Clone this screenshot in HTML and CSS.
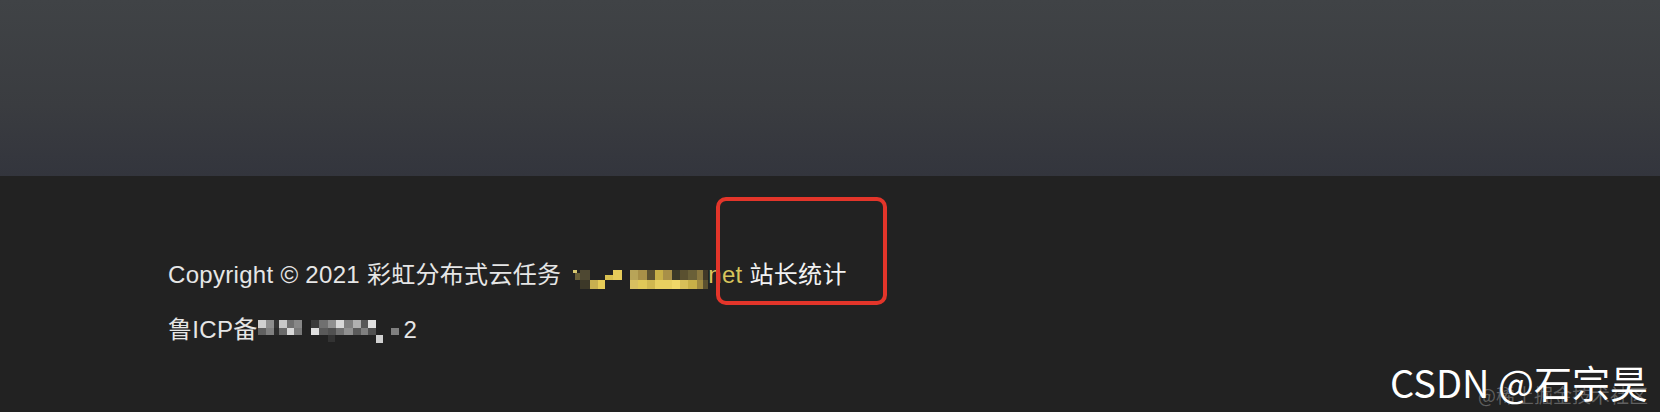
FILE: index.html
```html
<!DOCTYPE html>
<html lang="zh-CN">
<head>
<meta charset="utf-8">
<title>彩虹分布式云任务</title>
<link rel="stylesheet" href="styles.css">
</head>
<body>
<header class="hero"></header>
<footer class="footer">
  <div class="lines">
    <p class="line">Copyright © 2021 彩虹分布式云任务 <a class="site"><svg class="mosaic m1" width="140" height="22" viewBox="568 266 140 22" aria-hidden="true">
      <rect x="573" y="268" width="4" height="3" fill="#d8c870"/>
      <rect x="575" y="271" width="5" height="7" fill="#6a6038"/>
      <rect x="580" y="268" width="10" height="10" fill="#4e4832"/>
      <rect x="580" y="278" width="10" height="9" fill="#3c3828"/>
      <rect x="590" y="278" width="8" height="9" fill="#c8b050"/>
      <rect x="598" y="278" width="7" height="9" fill="#e6cc58"/>
      <rect x="605" y="273" width="8" height="5" fill="#d8c050"/>
      <rect x="613" y="268" width="9" height="10" fill="#e6cc5a"/>
      <rect x="630" y="268" width="8" height="10" fill="#b8a458"/>
      <rect x="630" y="278" width="8" height="9" fill="#d8c060"/>
      <rect x="638" y="268" width="9" height="10" fill="#a89048"/>
      <rect x="638" y="278" width="9" height="9" fill="#e0c858"/>
      <rect x="647" y="268" width="8" height="10" fill="#5a5030"/>
      <rect x="647" y="278" width="8" height="9" fill="#d0b850"/>
      <rect x="655" y="268" width="8" height="10" fill="#c8b048"/>
      <rect x="655" y="278" width="8" height="9" fill="#e8d060"/>
      <rect x="663" y="268" width="9" height="10" fill="#a89048"/>
      <rect x="663" y="278" width="9" height="9" fill="#e8d060"/>
      <rect x="672" y="268" width="8" height="10" fill="#3a3828"/>
      <rect x="672" y="278" width="8" height="9" fill="#f0d868"/>
      <rect x="680" y="268" width="8" height="10" fill="#5a5030"/>
      <rect x="680" y="278" width="8" height="9" fill="#d8c058"/>
      <rect x="688" y="268" width="9" height="10" fill="#6a6038"/>
      <rect x="688" y="278" width="9" height="9" fill="#c8b048"/>
      <rect x="697" y="268" width="6" height="10" fill="#8a7840"/>
      <rect x="697" y="278" width="6" height="9" fill="#a08a40"/>
      <rect x="703" y="268" width="5" height="10" fill="#403828"/>
      <rect x="703" y="278" width="5" height="9" fill="#5a5030"/>
    </svg>net</a> <a class="stat">站长统计</a></p>
    <p class="line">鲁ICP备<svg class="mosaic m2" width="146" height="23" viewBox="257 318 146 23" aria-hidden="true">
      <rect x="257" y="318" width="8" height="8" fill="#d0d0d0"/>
      <rect x="265" y="318" width="8" height="8" fill="#8e8e8e"/>
      <rect x="273" y="318" width="5" height="8" fill="#343434"/>
      <rect x="278" y="318" width="8" height="8" fill="#c8c8c8"/>
      <rect x="286" y="318" width="7" height="8" fill="#707070"/>
      <rect x="293" y="318" width="8" height="8" fill="#888888"/>
      <rect x="257" y="326" width="8" height="7" fill="#606060"/>
      <rect x="265" y="326" width="8" height="7" fill="#808080"/>
      <rect x="273" y="326" width="5" height="7" fill="#2c2c2c"/>
      <rect x="278" y="326" width="8" height="7" fill="#6a6a6a"/>
      <rect x="286" y="326" width="7" height="7" fill="#d8d8d8"/>
      <rect x="293" y="326" width="8" height="7" fill="#7a7a7a"/>
      <rect x="310" y="318" width="8" height="8" fill="#3c3c3c"/>
      <rect x="318" y="318" width="9" height="8" fill="#707070"/>
      <rect x="327" y="318" width="8" height="8" fill="#909090"/>
      <rect x="335" y="318" width="8" height="8" fill="#d8d8d8"/>
      <rect x="343" y="318" width="9" height="8" fill="#808080"/>
      <rect x="352" y="318" width="8" height="8" fill="#b0b0b0"/>
      <rect x="360" y="318" width="7" height="8" fill="#585858"/>
      <rect x="367" y="318" width="8" height="8" fill="#e0e0e0"/>
      <rect x="310" y="326" width="8" height="7" fill="#e0e0e0"/>
      <rect x="318" y="326" width="9" height="7" fill="#5a5a5a"/>
      <rect x="327" y="326" width="8" height="7" fill="#505050"/>
      <rect x="335" y="326" width="8" height="7" fill="#707070"/>
      <rect x="343" y="326" width="9" height="7" fill="#909090"/>
      <rect x="352" y="326" width="8" height="7" fill="#5a5a5a"/>
      <rect x="360" y="326" width="7" height="7" fill="#808080"/>
      <rect x="367" y="326" width="8" height="7" fill="#505050"/>
      <rect x="327" y="333" width="7" height="7" fill="#333333"/>
      <rect x="375" y="333" width="7" height="8" fill="#d0d0d0"/>
      <rect x="390" y="326" width="8" height="7" fill="#808080"/>
    </svg>2</p>
  </div>
  <div class="annot"></div>
  <div class="wm-juejin">@稀土掘金技术社区</div>
  <div class="wm-csdn">CSDN @石宗昊</div>
</footer>
</body>
</html>
```
FILE: styles.css
```css
* { box-sizing: border-box; }
html, body {
  margin: 0;
  padding: 0;
  width: 1660px;
  height: 412px;
  overflow: hidden;
  background: #222222;
  font-family: "Liberation Sans", "Noto Sans CJK SC", sans-serif;
}
.hero {
  height: 176px;
  background: linear-gradient(to bottom, #404346 0%, #3a3c40 60%, #33353d 100%);
}
.footer {
  position: relative;
  height: 236px;
  background: #222222;
  padding: 84px 0 0 168px;
}
.lines {
  display: flex;
  flex-direction: column;
  gap: 25px;
}
.line {
  margin: 0;
  font-size: 24px;
  line-height: 30px;
  letter-spacing: 0.3px;
  color: #e6e6e6;
  white-space: nowrap;
}
.site {
  color: #d8c55c;
  text-decoration: none;
}
.stat {
  color: #f2f2f2;
  text-decoration: none;
}
.mosaic { display: inline-block; }
.m1 { vertical-align: -7px; }
.m2 { vertical-align: -5px; }
.annot {
  position: absolute;
  left: 716px;
  top: 21px;
  width: 171px;
  height: 108px;
  border: 4px solid #e3352a;
  border-radius: 10px;
}
.wm-juejin {
  position: absolute;
  right: 12px;
  top: 209px;
  font-family: "Noto Sans CJK SC", sans-serif;
  font-size: 19px;
  line-height: 19px;
  color: rgba(255, 255, 255, 0.28);
  white-space: nowrap;
}
.wm-csdn {
  position: absolute;
  right: 12px;
  top: 187px;
  font-family: "Noto Sans CJK SC", sans-serif;
  font-size: 38px;
  line-height: 38px;
  color: #ffffff;
  white-space: nowrap;
}
```
